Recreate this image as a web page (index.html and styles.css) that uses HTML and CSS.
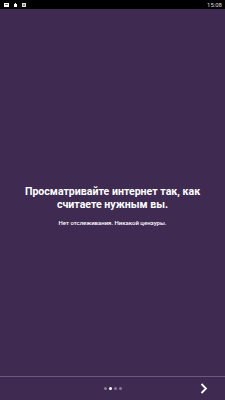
FILE: index.html
```html
<!DOCTYPE html>
<html lang="ru">
<head>
<meta charset="utf-8">
<link rel="stylesheet" href="styles.css">
</head>
<body>
<div class="screen">
  <div class="statusbar">
    <div class="status-icons">
      <svg class="si" width="5" height="4" viewBox="0 0 5 4"><rect x="0" y="0" width="5" height="4" fill="#fff"/><rect x="1" y="1" width="3" height="1" fill="#777"/></svg>
      <svg class="si" width="3" height="4" viewBox="0 0 3 4"><rect x="1" y="0" width="1" height="1" fill="#fff"/><rect x="0" y="1" width="3" height="3" fill="#fff"/></svg>
      <svg class="si" width="4" height="4" viewBox="0 0 4 4"><rect x="0" y="0" width="4" height="4" fill="#ddd"/><rect x="1" y="1" width="2" height="2" fill="#888"/></svg>
    </div>
    <span class="time">15:08</span>
  </div>
  <main class="content">
    <h1 class="title">Просматривайте интернет так, как считаете нужным вы.</h1>
    <p class="subtitle">Нет отслеживания. Никакой цензуры.</p>
  </main>
  <footer class="footer">
    <div class="dots">
      <span class="dot"></span>
      <span class="dot active"></span>
      <span class="dot"></span>
      <span class="dot"></span>
    </div>
    <svg class="next" width="8" height="11" viewBox="0 0 8 11"><path d="M1.5 1 L6 5.5 L1.5 10" fill="none" stroke="#fff" stroke-width="1.8"/></svg>
  </footer>
</div>
</body>
</html>
```
FILE: styles.css
```css
html, body {
  margin: 0;
  padding: 0;
}
body {
  width: 225px;
  height: 400px;
  overflow: hidden;
  font-family: Roboto, "Noto Sans", sans-serif;
}
.screen {
  width: 225px;
  height: 400px;
  display: flex;
  flex-direction: column;
  background: #3f2a51;
}
.statusbar {
  height: 9px;
  background: #000;
  display: flex;
  align-items: center;
  justify-content: space-between;
  padding: 0 3px 0 4px;
}
.status-icons {
  display: flex;
  align-items: center;
  gap: 5px;
}
.si { display: block; }
.time {
  color: #ddd;
  font-size: 6px;
  line-height: 9px;
}
.content {
  flex: 1;
  display: flex;
  flex-direction: column;
  align-items: center;
  justify-content: center;
  padding: 26px 20px 0;
  text-align: center;
}
.title {
  margin: 0;
  color: #fff;
  font-size: 10.6px;
  font-weight: 700;
  line-height: 13px;
}
.subtitle {
  margin: 8px 0 0;
  color: #fff;
  font-size: 6px;
  font-weight: 500;
  line-height: 8px;
}
.footer {
  height: 23px;
  border-top: 1px solid #6b5882;
  display: flex;
  align-items: center;
  justify-content: center;
  position: relative;
}
.dots {
  display: flex;
  gap: 2px;
}
.dot {
  width: 3px;
  height: 3px;
  border-radius: 50%;
  background: #8a7a98;
}
.dot.active {
  background: #fff;
}
.next {
  position: absolute;
  right: 17px;
  top: 6px;
}
```
